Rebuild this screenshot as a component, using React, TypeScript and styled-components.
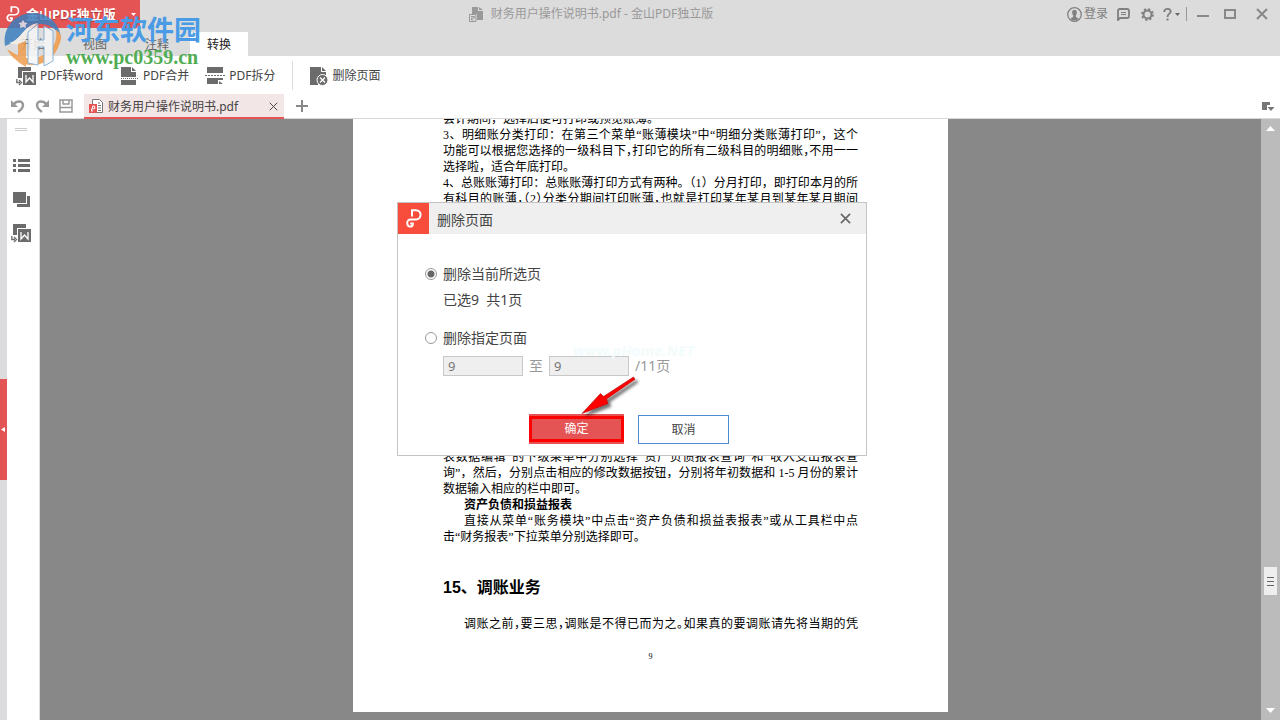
import React, { useState } from "react";
import styled, { createGlobalStyle } from "styled-components";

const GlobalStyle = createGlobalStyle`
  * { box-sizing: border-box; }
  body {
    margin: 0;
    font-family: "Noto Sans", "Noto Sans CJK SC", sans-serif;
    font-size: 12px;
    line-height: 16px;
    color: #444;
    background: #fff;
  }
  button, input { font: inherit; color: inherit; margin: 0; padding: 0; }
  button { border: 0; background: none; cursor: pointer; }
  svg { display: block; flex: none; }
  p, h1, h2, h3 { margin: 0; }
`;

const Shell = styled.div`
  display: flex;
  flex-direction: column;
  min-height: 100vh;
  position: relative;
`;

const TitleBar = styled.header`
  display: flex;
  height: 28px;
  background: #dcdcdc;
  color: #808080;
`;

const Brand = styled.button`
  display: flex;
  align-items: center;
  width: 140px;
  padding: 0 4px 0 6px;
  gap: 6px;
  background: #e45454;
  color: #fff;
  font-size: 13px;
  font-weight: 700;
  white-space: nowrap;
  text-shadow: 0 1px 1px #a33;
  svg:last-child { margin-left: auto; }
`;

const WindowTitle = styled.div`
  flex: 1;
  display: flex;
  align-items: center;
  justify-content: center;
  gap: 8px;
  padding-right: 25px;
  color: #999;
  white-space: nowrap;
`;

const WindowTools = styled.div`
  display: flex;
  align-items: center;
  padding-right: 2px;
`;

const LoginButton = styled.button`
  display: flex;
  align-items: center;
  gap: 2px;
  padding-right: 3px;
`;

const ToolButton = styled.button<{ $w: number }>`
  display: flex;
  align-items: center;
  justify-content: center;
  gap: 3px;
  width: ${(p) => p.$w}px;
  height: 28px;
`;

const TitleDivider = styled.span`
  width: 1px;
  height: 14px;
  margin: 0 5px 0 3px;
  background: #999;
`;

const MenuTabs = styled.nav`
  display: flex;
  align-items: flex-end;
  height: 28px;
  padding-left: 2px;
  background: #dcdcdc;
`;

const MenuTab = styled.button<{ $active?: boolean }>`
  width: ${(p) => (p.$active ? 58 : 62)}px;
  height: 24px;
  margin-left: ${(p) => (p.$active ? 2 : 0)}px;
  padding-top: 2px;
  background: ${(p) => (p.$active ? "#fff" : "transparent")};
  color: ${(p) => (p.$active ? "#222" : "#666")};
`;

const Ribbon = styled.div`
  display: flex;
  align-items: center;
  height: 38px;
  padding: 1px 0 0 16px;
`;

const RibbonButton = styled.button`
  display: flex;
  align-items: center;
  gap: 4px;
  margin-right: 16px;
  white-space: nowrap;
`;

const RibbonDivider = styled.span`
  width: 1px;
  height: 29px;
  margin-right: 16px;
  background: #ddd;
`;

const FileBar = styled.div`
  display: flex;
  align-items: stretch;
  height: 25px;
  border-bottom: 1px solid #d8d8d8;
`;

const QuickTools = styled.div`
  display: flex;
  align-items: center;
  gap: 8px;
  width: 84px;
  padding-left: 10px;
`;

const FileTab = styled.div`
  display: flex;
  align-items: center;
  gap: 4px;
  width: 200px;
  height: 25px;
  padding: 2px 6px 0 5px;
  background: #f2e6e6;
  border-bottom: 2px solid #e45454;
  color: #444;
  button { margin-left: auto; }
`;

const AddTab = styled.button`
  width: 36px;
  display: flex;
  align-items: center;
  justify-content: center;
`;

const LayoutToggle = styled.button`
  margin: 0 5px 0 auto;
`;

const Workspace = styled.main`
  flex: 1;
  display: flex;
  background: #888;
`;

const CollapseStrip = styled.div`
  display: flex;
  align-items: center;
  width: 7px;
  padding-top: 20px;
  background: #dcdcdf;
`;

const CollapseButton = styled.button`
  display: flex;
  align-items: center;
  width: 7px;
  height: 101px;
  background: #e45454;
`;

const Rail = styled.aside`
  display: flex;
  flex-direction: column;
  align-items: center;
  width: 33px;
  padding: 9px 4px 0 0;
  background: #fff;
  border-right: 1px solid #ddd;
`;

const RailGrip = styled.span`
  width: 12px;
  height: 3px;
  margin-bottom: 17px;
  border: solid #ccc;
  border-width: 1px 0;
`;

const RailButton = styled.button`
  display: flex;
  align-items: center;
  justify-content: center;
  width: 24px;
  height: 34px;
`;

const Viewer = styled.section`
  flex: 1;
  display: flex;
  justify-content: center;
  padding-bottom: 8px;
`;

const Page = styled.article`
  width: 595px;
  padding: 0 90px 40px;
  overflow: hidden;
  background: #fff;
  color: #000;
  font-family: "Liberation Serif", "Noto Sans CJK SC", serif;
`;

const UpperText = styled.div`
  margin: -8px 0 242px;
`;

const Line = styled.p<{ $full?: boolean; $indent?: boolean; $bold?: boolean; $halfMarks?: boolean }>`
  font-size: 12px;
  line-height: 16px;
  white-space: nowrap;
  padding-left: ${(p) => (p.$indent ? 21 : 0)}px;
  font-weight: ${(p) => (p.$bold ? 700 : 400)};
  font-feature-settings: ${(p) => (p.$halfMarks ? '"halt"' : "normal")};
  text-align: ${(p) => (p.$full ? "justify" : "left")};
  text-align-last: ${(p) => (p.$full ? "justify" : "left")};
`;

const Chapter = styled.h2`
  margin: 31px 0 16px;
  font: 700 16px/24px "Liberation Sans", "Noto Sans CJK SC", sans-serif;
`;

const PageNumber = styled.footer`
  margin-top: 17px;
  font-size: 8px;
  text-align: center;
`;

const ScrollBar = styled.div`
  display: flex;
  flex-direction: column;
  align-items: center;
  width: 19px;
  padding: 7px 0;
  background: #bbb;
`;

const Track = styled.div`
  flex: 1;
  display: flex;
  flex-direction: column;
  justify-content: flex-end;
  padding-bottom: 113px;
`;

const Thumb = styled.div`
  display: flex;
  align-items: center;
  justify-content: center;
  width: 13px;
  height: 28px;
  background: #eee;
`;

const Overlay = styled.div`
  position: fixed;
  inset: 0;
  display: flex;
  align-items: flex-start;
  justify-content: center;
  padding: 202px 16px 0 0;
`;

const Dialog = styled.form`
  position: relative;
  width: 470px;
  border: 1px solid #c4c4c4;
  background: #fff;
  font-size: 14px;
  line-height: 20px;
`;

const DialogHead = styled.div`
  display: flex;
  align-items: center;
  gap: 8px;
  height: 31px;
  padding-right: 15px;
  background: #efefef;
  h1 { font-size: 14px; font-weight: 400; padding-top: 3px; }
  button { margin-left: auto; }
`;

const DialogLogo = styled.span`
  display: flex;
  align-items: center;
  justify-content: center;
  width: 31px;
  height: 31px;
  background: #f84c3c;
`;

const DialogBody = styled.div`
  padding: 30px 27px 11px;
`;

const Option = styled.label`
  display: flex;
  align-items: center;
  gap: 6px;
  height: 20px;
`;

const Radio = styled.input`
  appearance: none;
  width: 12px;
  height: 12px;
  border: 1px solid #999;
  border-radius: 50%;
  background: #fff;
  &:checked { background: radial-gradient(circle, #666 0 3px, #fff 4px); }
`;

const Hint = styled.p`
  margin: 6px 0 18px 18px;
`;

const RangeRow = styled.div`
  display: flex;
  align-items: center;
  gap: 6px;
  margin: 8px 0 38px 18px;
  color: #999;
`;

const PageInput = styled.input`
  width: 80px;
  height: 20px;
  padding: 0 4px;
  border: 1px solid #c8c8c8;
  border-radius: 0;
  background: #efefef;
  font-size: 13px;
  color: #777;
`;

const Actions = styled.div`
  display: flex;
  gap: 14px;
  padding-left: 104px;
  font-size: 12px;
`;

const Confirm = styled.button`
  position: relative;
  width: 95px;
  height: 30px;
  background: #e45454;
  color: #fff;
  &::after {
    content: "";
    position: absolute;
    inset: 2px 0;
    border: 3px solid #f00;
  }
`;

const Cancel = styled.button`
  width: 91px;
  height: 29px;
  margin-top: 1px;
  border: 1px solid #4a8ccf;
  background: #fff;
`;

const FaintMark = styled.span`
  position: absolute;
  left: 175px;
  top: 137px;
  color: #f3fcfc;
  font: italic 700 15px/20px "Noto Sans", sans-serif;
`;

const Pointer = styled.svg`
  position: absolute;
  left: 180px;
  top: 170px;
`;

const SiteMark = styled.div`
  position: absolute;
  left: 4px;
  top: 11px;
  display: flex;
  gap: 4px;
  pointer-events: none;
  > svg { opacity: 0.85; }
`;

const SiteText = styled.div`
  display: flex;
  flex-direction: column;
  white-space: nowrap;
  strong {
    font: 700 27px/36px "Noto Sans CJK SC", sans-serif;
    color: #4a9be6;
  }
  span {
    font: 700 20px/20px "Liberation Serif", serif;
    color: #51ad54;
  }
`;

const G = "#6b6b6b";

const Logo = ({ w, h }: { w: number; h: number }) => (
  <svg width={w} height={h} viewBox="0 0 16 19" fill="none" stroke="#fff" strokeWidth="2">
    <path d="M6 7.500V1.200h4a4.600 4.600 0 0 1 0 9.200H4.600a3.400 3.400 0 0 0-3.400 3.400c0 2.400 1.400 3.800 3 3.800s2.600-1 2.600-2.400v-.8H4.200" />
  </svg>
);

const Caret = ({ color }: { color: string }) => (
  <svg width="5" height="3" viewBox="0 0 5 3"><path d="M0 0h5L2.500 3z" fill={color} /></svg>
);

const Cross = ({ size, color, w }: { size: number; color: string; w: number }) => (
  <svg width={size} height={size} viewBox="0 0 12 12" fill="none" stroke={color} strokeWidth={w}>
    <path d="M1 1l10 10M11 1L1 11" />
  </svg>
);

const ToWord = () => (
  <svg width="20" height="20" viewBox="0 0 20 20">
    <path d="M2 1h13v4H6v7H2z" fill={G} />
    <path d="M7 6h13v13H7z" fill={G} />
    <path d="M10 9v7l3.500-4 3.500 4V9" fill="none" stroke="#fff" strokeWidth="1.300" />
    <path d="M.8 13v3.500H4M3 14l2.500 2.500L3 19" fill="none" stroke={G} strokeWidth="1.300" />
  </svg>
);

const Merge = () => (
  <svg width="20" height="20" viewBox="0 0 20 20" fill={G}>
    <path d="M2 1h10v5h5v5H2zM13 1l4 4h-4zM2 14h15v5H2z" />
    <path d="M2 12.500h18" stroke={G} strokeDasharray="1 1" />
  </svg>
);

const Split = () => (
  <svg width="20" height="20" viewBox="0 0 20 20" fill={G}>
    <path d="M2 1h16v6H2zM2 12h16v2h-5v4H2zM14 15l4 3h-4z" />
    <path d="M0 9.500h20" stroke={G} strokeDasharray="2 1" />
  </svg>
);

const DeletePage = () => (
  <svg width="20" height="20" viewBox="0 0 20 20">
    <path d="M1 1h11v5h5v4H9v9H1zM13 1l4 4h-4z" fill={G} />
    <circle cx="13.500" cy="14" r="5.500" fill={G} stroke="#fff" />
    <path d="M11 11.500l5 5M16 11.500l-5 5" stroke="#fff" strokeWidth="1.300" />
  </svg>
);

const Undo = ({ flip }: { flip?: boolean }) => (
  <svg width="16" height="16" viewBox="0 0 16 16">
    <g transform={flip ? "translate(16 0) scale(-1 1)" : undefined}>
      <path d="M1 2v7h7z" fill="#999" />
      <path d="M4 6c2-3 9-4 9 1 0 3-2 5-5 7" fill="none" stroke="#999" strokeWidth="2.400" />
    </g>
  </svg>
);

const Save = () => (
  <svg width="16" height="16" viewBox="0 0 16 16" fill="none" stroke="#999" strokeWidth="1.500">
    <path d="M2 2h12v12H2zM5 2v4h6V2M2.500 9.500h11" />
  </svg>
);

const DocIcon = ({ color, badge }: { color: string; badge: string }) => (
  <svg width="15" height="15" viewBox="0 0 15 15">
    <path d="M3.500 .5h7l3 3v10h-10z" fill="#fff" stroke={color} />
    <path d="M9 4h2M9 6.500h3M9 9h3M9 11.500h3" stroke={color} />
    <path d="M0 5h8v9H0z" fill={badge} />
    <path d="M3.500 9.500V7.200h2.200v2.600H2.500V12h1.500" fill="none" stroke="#fff" />
  </svg>
);

const TitleDoc = () => (
  <svg width="14" height="15" viewBox="0 0 14 15" fill="#999">
    <path d="M3 0h6v4h5v9H8V7H3zM10 0l4 3h-4z" />
    <path d="M.5 7.500h6.500V14.500H.5z" fill="#ddd" stroke="#999" />
    <path d="M2 9.500h3.500v1.500H2.500v2h2" fill="none" stroke="#999" />
  </svg>
);

const SiteLogo = () => (
  <svg width="58" height="58" viewBox="0 0 58 58">
    <path d="M1 35C-2 16 12 2 29 2c15 0 26 10 28 24-5-9-13-13-20-13C20 12 19 29 1 35z" fill="#3c7fbe" />
    <path d="M3 38c10 22 46 24 54-10 1-3-2-8-5-9 2 13-5 22-15 26-13 5-22 1-34-7z" fill="#f09a45" />
    <path d="M5 32C18 29 18 15 34 12L22 25v30l-8-5V34z" fill="#f3efe9" />
    <path d="M24 21l10-8v16h6V15l9 5v30l-9 5V36h-6v18l-10-2z" fill="#f6f6f6" stroke="#7ba9d2" />
    <path d="M14 33l8-3v26l-8-5z" fill="#ee9d50" />
    <path d="M19 9l1.500 2.500 3 .5-2 2 .5 3-3-1-3 1 .5-3-2-2 3-.5z" fill="#d6e7f4" />
  </svg>
);

export default function App() {
  const [mode, setMode] = useState("current");
  return (
    <Shell>
      <GlobalStyle />
      <TitleBar>
        <Brand type="button">
          <Logo w={14} h={16} />
          金山PDF独立版
          <Caret color="#fff" />
        </Brand>
        <WindowTitle>
          <TitleDoc />
          财务用户操作说明书.pdf - 金山PDF独立版
        </WindowTitle>
        <WindowTools>
          <LoginButton type="button">
            <svg width="15" height="15" viewBox="0 0 15 15">
              <circle cx="7.500" cy="7.500" r="6.800" fill="none" stroke="#808080" strokeWidth="1.300" />
              <path d="M7.500 3C5 3 5 5 5.300 6.500c.2 1.200.7 1.700 1 2L6 10l-2.500 1.500C6 14 9 14 11.500 11.500L9 10l-.3-1.500c.4-.3.9-.8 1-2C10 5 10 3 7.500 3z" fill="#808080" />
            </svg>
            登录
          </LoginButton>
          <ToolButton type="button" $w={24} aria-label="反馈">
            <svg width="13" height="13" viewBox="0 0 13 13" fill="none" stroke="#808080">
              <path d="M1 12V3q0-2 2-2h7q2 0 2 2v5q0 2-2 2H3z" strokeWidth="1.800" />
              <path d="M4 4.500h5M4 6.500h5" />
            </svg>
          </ToolButton>
          <ToolButton type="button" $w={24} aria-label="设置">
            <svg width="13" height="13" viewBox="0 0 13 13" fill="none" stroke="#808080">
              <circle cx="6.500" cy="6.500" r="4" strokeWidth="2" />
              <circle cx="6.500" cy="6.500" r="5.500" strokeWidth="1.800" strokeDasharray="2.160 2.160" />
            </svg>
          </ToolButton>
          <ToolButton type="button" $w={24} aria-label="帮助">
            <svg width="9" height="13" viewBox="0 0 9 13">
              <path d="M1.200 4c0-4 6.500-4 6.500-.6 0 2.300-3.200 2.300-3.200 5.600" fill="none" stroke="#808080" strokeWidth="1.900" />
              <path d="M3.500 10.500h2v2h-2z" fill="#808080" />
            </svg>
            <Caret color="#666" />
          </ToolButton>
          <TitleDivider />
          <ToolButton type="button" $w={22} aria-label="最小化">
            <svg width="12" height="12" viewBox="0 0 12 12"><path d="M0 7h12v2H0z" fill="#888" /></svg>
          </ToolButton>
          <ToolButton type="button" $w={32} aria-label="最大化">
            <svg width="12" height="10" viewBox="0 0 12 10"><path d="M1 1h10v8H1z" fill="none" stroke="#888" strokeWidth="2" /></svg>
          </ToolButton>
          <ToolButton type="button" $w={32} aria-label="关闭">
            <Cross size={12} color="#888" w={2} />
          </ToolButton>
        </WindowTools>
      </TitleBar>

      <MenuTabs>
        <MenuTab type="button">开始</MenuTab>
        <MenuTab type="button">视图</MenuTab>
        <MenuTab type="button">注释</MenuTab>
        <MenuTab type="button" $active>转换</MenuTab>
      </MenuTabs>

      <Ribbon>
        <RibbonButton type="button"><ToWord />PDF转word</RibbonButton>
        <RibbonButton type="button"><Merge />PDF合并</RibbonButton>
        <RibbonButton type="button"><Split />PDF拆分</RibbonButton>
        <RibbonDivider />
        <RibbonButton type="button"><DeletePage />删除页面</RibbonButton>
      </Ribbon>

      <FileBar>
        <QuickTools>
          <button type="button" aria-label="撤销"><Undo /></button>
          <button type="button" aria-label="恢复"><Undo flip /></button>
          <button type="button" aria-label="保存"><Save /></button>
        </QuickTools>
        <FileTab>
          <DocIcon color="#777" badge="#e45454" />
          财务用户操作说明书.pdf
          <button type="button" aria-label="关闭标签"><Cross size={9} color="#444" w={1.3} /></button>
        </FileTab>
        <AddTab type="button" aria-label="新建标签">
          <svg width="12" height="12" viewBox="0 0 12 12"><path d="M0 6h12M6 0v12" stroke="#888" strokeWidth="2" /></svg>
        </AddTab>
        <LayoutToggle type="button" aria-label="切换布局">
          <svg width="13" height="11" viewBox="0 0 13 11" fill="#777"><path d="M0 1h8v3H5v5H0zM5.500 6h7L9 10z" /></svg>
        </LayoutToggle>
      </FileBar>

      <Workspace>
        <CollapseStrip>
          <CollapseButton type="button" aria-label="收起">
            <svg width="5" height="5" viewBox="0 0 5 5"><path d="M5 0v5L1 2.500z" fill="#fff" /></svg>
          </CollapseButton>
        </CollapseStrip>
        <Rail>
          <RailGrip />
          <RailButton type="button" aria-label="目录">
            <svg width="17" height="13" viewBox="0 0 17 13" fill={G}>
              <path d="M0 0h3v3H0zM5 0h12v3H5zM0 5h3v3H0zM5 5h12v3H5zM0 10h3v3H0zM5 10h12v3H5z" />
            </svg>
          </RailButton>
          <RailButton type="button" aria-label="缩略图">
            <svg width="17" height="15" viewBox="0 0 17 15" fill={G}><path d="M0 0h13v11H0zM14 4h3v11H4v-3h10z" /></svg>
          </RailButton>
          <RailButton type="button" aria-label="转换为Word"><ToWord /></RailButton>
        </Rail>
        <Viewer>
          <Page>
            <UpperText>
              <Line>会计期间，选择后便可打印或预览账薄。</Line>
              <Line $full>3、明细账分类打印：在第三个菜单“账薄模块”中“明细分类账薄打印”，这个</Line>
              <Line $full $halfMarks>功能可以根据您选择的一级科目下，打印它的所有二级科目的明细账，不用一一</Line>
              <Line>选择啦，适合年底打印。</Line>
              <Line $full>4、总账账薄打印：总账账薄打印方式有两种。（1）分月打印，即打印本月的所</Line>
              <Line $full $halfMarks>有科目的账薄，（2）分类分期间打印账薄，也就是打印某年某月到某年某月期间</Line>
            </UpperText>
            <Line $full>表数据编辑”的下级菜单中分别选择“资产负债报表查询”和“收入支出报表查</Line>
            <Line $full>询”，然后，分别点击相应的修改数据按钮，分别将年初数据和 1-5 月份的累计</Line>
            <Line>数据输入相应的栏中即可。</Line>
            <Line as="h3" $indent $bold>资产负债和损益报表</Line>
            <Line $full $indent>直接从菜单“账务模块”中点击“资产负债和损益表报表”或从工具栏中点</Line>
            <Line>击“财务报表”下拉菜单分别选择即可。</Line>
            <Chapter>15、调账业务</Chapter>
            <Line $full $indent $halfMarks>调账之前，要三思，调账是不得已而为之。如果真的要调账请先将当期的凭</Line>
            <PageNumber>9</PageNumber>
          </Page>
        </Viewer>
        <ScrollBar>
          <svg width="9" height="5" viewBox="0 0 9 5"><path d="M0 5h9L4.500 0z" fill="#fff" /></svg>
          <Track>
            <Thumb>
              <svg width="7" height="9" viewBox="0 0 7 9"><path d="M0 .5h7M0 4.500h7M0 8.500h7" stroke="#666" /></svg>
            </Thumb>
          </Track>
          <svg width="9" height="5" viewBox="0 0 9 5"><path d="M0 0h9L4.500 5z" fill="#fff" /></svg>
        </ScrollBar>
      </Workspace>

      <SiteMark>
        <SiteLogo />
        <SiteText>
          <strong>河东软件园</strong>
          <span>www.pc0359.cn</span>
        </SiteText>
      </SiteMark>

      <Overlay>
        <Dialog onSubmit={(e) => e.preventDefault()}>
          <DialogHead>
            <DialogLogo><Logo w={16} h={19} /></DialogLogo>
            <h1>删除页面</h1>
            <button type="button" aria-label="关闭"><Cross size={11} color="#666" w={1.8} /></button>
          </DialogHead>
          <DialogBody>
            <Option>
              <Radio type="radio" name="mode" checked={mode === "current"} onChange={() => setMode("current")} />
              删除当前所选页
            </Option>
            <Hint>已选9&nbsp; 共1页</Hint>
            <Option>
              <Radio type="radio" name="mode" checked={mode === "range"} onChange={() => setMode("range")} />
              删除指定页面
            </Option>
            <RangeRow>
              <PageInput aria-label="起始页" defaultValue="9" disabled={mode === "current"} />
              至
              <PageInput aria-label="结束页" defaultValue="9" disabled={mode === "current"} />
              /11页
            </RangeRow>
            <Actions>
              <Confirm type="submit">确定</Confirm>
              <Cancel type="button">取消</Cancel>
            </Actions>
          </DialogBody>
          <FaintMark aria-hidden="true">www.pHome.NET</FaintMark>
          <Pointer width="62" height="46" viewBox="0 0 62 46">
            <defs>
              <filter id="soft" x="-20%" y="-20%" width="150%" height="150%">
                <feDropShadow dx="3" dy="3" stdDeviation="1.500" floodColor="#000" floodOpacity="0.550" />
              </filter>
            </defs>
            <path d="M55.500 4L57 6.300 28.500 26 30 30.500 4 40.500 22.500 20.500 25.500 23.500z" fill="#f00" stroke="#a00" strokeWidth="0.600" filter="url(#soft)" />
          </Pointer>
        </Dialog>
      </Overlay>
    </Shell>
  );
}
